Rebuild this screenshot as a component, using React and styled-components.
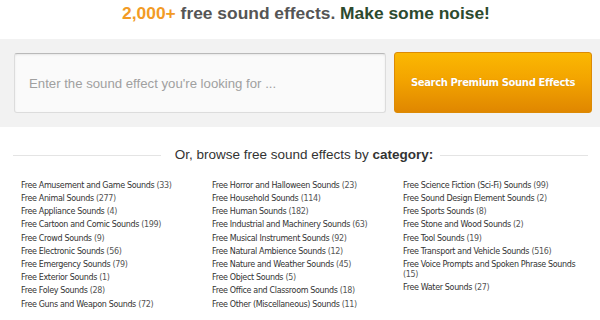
import React from 'react'
import styled, { createGlobalStyle } from 'styled-components'

const GlobalStyle = createGlobalStyle`
    body {
        margin: 0;
        background: #fff;
        font-family: "Liberation Sans", Arial, sans-serif;
    }
`

const Page = styled.div`
    width: 600px;
    height: 320px;
    overflow: hidden;
`

const Title = styled.h1`
    box-sizing: border-box;
    height: 39px;
    margin: 0;
    padding: 2px 0 0 12px;
    text-align: center;
    font-size: 17.4px;
    line-height: 22px;
    font-weight: 700;
    color: #555;
`

const Highlight = styled.span`
    color: ${({ $color }) => $color};
`

const SearchBand = styled.div`
    box-sizing: border-box;
    height: 88px;
    padding: 13px 8px 0 14px;
    background: #f2f2f2;
    display: flex;
    align-items: flex-start;
    gap: 8px;
`

const SearchInput = styled.input`
    box-sizing: border-box;
    width: 372px;
    height: 60px;
    margin-top: 1px;
    padding: 0 14px;
    border: 1px solid #dcdcdc;
    border-top-color: #b9b9b9;
    border-radius: 3px;
    background: #fafafa;
    box-shadow: inset 0 1px 2px rgba(0, 0, 0, 0.08);
    font-family: "Liberation Sans", Arial, sans-serif;
    font-size: 13.2px;
    color: #333;
    outline: none;

    &::placeholder {
        color: #a0a0a0;
    }
`

const SearchButton = styled.button`
    box-sizing: border-box;
    width: 198px;
    height: 61px;
    padding: 0;
    border: 1px solid #dc8a05;
    border-radius: 3px;
    background: linear-gradient(#fbb802, #f3a400 45%, #e08700);
    color: #fff;
    font-family: "DejaVu Sans", Verdana, sans-serif;
    font-weight: 700;
    font-size: 10px;
    letter-spacing: -0.35px;
    text-shadow: 0 0 1px rgba(160, 90, 0, 0.4);
    cursor: pointer;
`

const Browse = styled.section`
    padding: 20px 12px 0 13px;
`

const BrowseHeading = styled.div`
    display: flex;
    align-items: center;
    height: 16px;
`

const Divider = styled.div`
    flex: 1;
    height: 1px;
    background: #e4e4e4;
`

const HeadingText = styled.h2`
    margin: 0 7px 0 14px;
    font-size: 13.5px;
    line-height: 16px;
    font-weight: 400;
    color: #333;
    white-space: nowrap;

    b {
        font-weight: 700;
    }
`

const CategoryGrid = styled.div`
    display: grid;
    grid-template-columns: 191px 191px 185px;
    padding: 17.7px 0 0 8px;
`

const Column = styled.ul`
    list-style: none;
    margin: 0;
    padding: 0;
    display: flex;
    flex-direction: column;
    gap: 3.5px;
`

const Item = styled.li`
    font-family: "DejaVu Sans", Verdana, sans-serif;
    font-size: 8px;
    letter-spacing: -0.35px;
    line-height: 9.7px;
    color: #333;
`

const Count = styled.span`
    color: #555;
`

const columns = [
    [
        ['Free Amusement and Game Sounds', 33],
        ['Free Animal Sounds', 277],
        ['Free Appliance Sounds', 4],
        ['Free Cartoon and Comic Sounds', 199],
        ['Free Crowd Sounds', 9],
        ['Free Electronic Sounds', 56],
        ['Free Emergency Sounds', 79],
        ['Free Exterior Sounds', 1],
        ['Free Foley Sounds', 28],
        ['Free Guns and Weapon Sounds', 72],
    ],
    [
        ['Free Horror and Halloween Sounds', 23],
        ['Free Household Sounds', 114],
        ['Free Human Sounds', 182],
        ['Free Industrial and Machinery Sounds', 63],
        ['Free Musical Instrument Sounds', 92],
        ['Free Natural Ambience Sounds', 12],
        ['Free Nature and Weather Sounds', 45],
        ['Free Object Sounds', 5],
        ['Free Office and Classroom Sounds', 18],
        ['Free Other (Miscellaneous) Sounds', 11],
    ],
    [
        ['Free Science Fiction (Sci-Fi) Sounds', 99],
        ['Free Sound Design Element Sounds', 2],
        ['Free Sports Sounds', 8],
        ['Free Stone and Wood Sounds', 2],
        ['Free Tool Sounds', 19],
        ['Free Transport and Vehicle Sounds', 516],
        ['Free Voice Prompts and Spoken Phrase Sounds', 15],
        ['Free Water Sounds', 27],
    ],
]

export default function App() {
    return (
        <Page>
            <GlobalStyle />
            <Title>
                <Highlight $color="#f29b25">2,000+</Highlight> free sound effects.{' '}
                <Highlight $color="#2c4a2e">Make some noise!</Highlight>
            </Title>

            <SearchBand>
                <SearchInput placeholder="Enter the sound effect you're looking for ..." />
                <SearchButton>Search Premium Sound Effects</SearchButton>
            </SearchBand>

            <Browse>
                <BrowseHeading>
                    <Divider />
                    <HeadingText>Or, browse free sound effects by <b>category:</b></HeadingText>
                    <Divider />
                </BrowseHeading>

                <CategoryGrid>
                    {columns.map((items, i) => (
                        <Column key={i}>
                            {items.map(([name, count]) => (
                                <Item key={name}>
                                    {name} <Count>({count})</Count>
                                </Item>
                            ))}
                        </Column>
                    ))}
                </CategoryGrid>
            </Browse>
        </Page>
    )
}
